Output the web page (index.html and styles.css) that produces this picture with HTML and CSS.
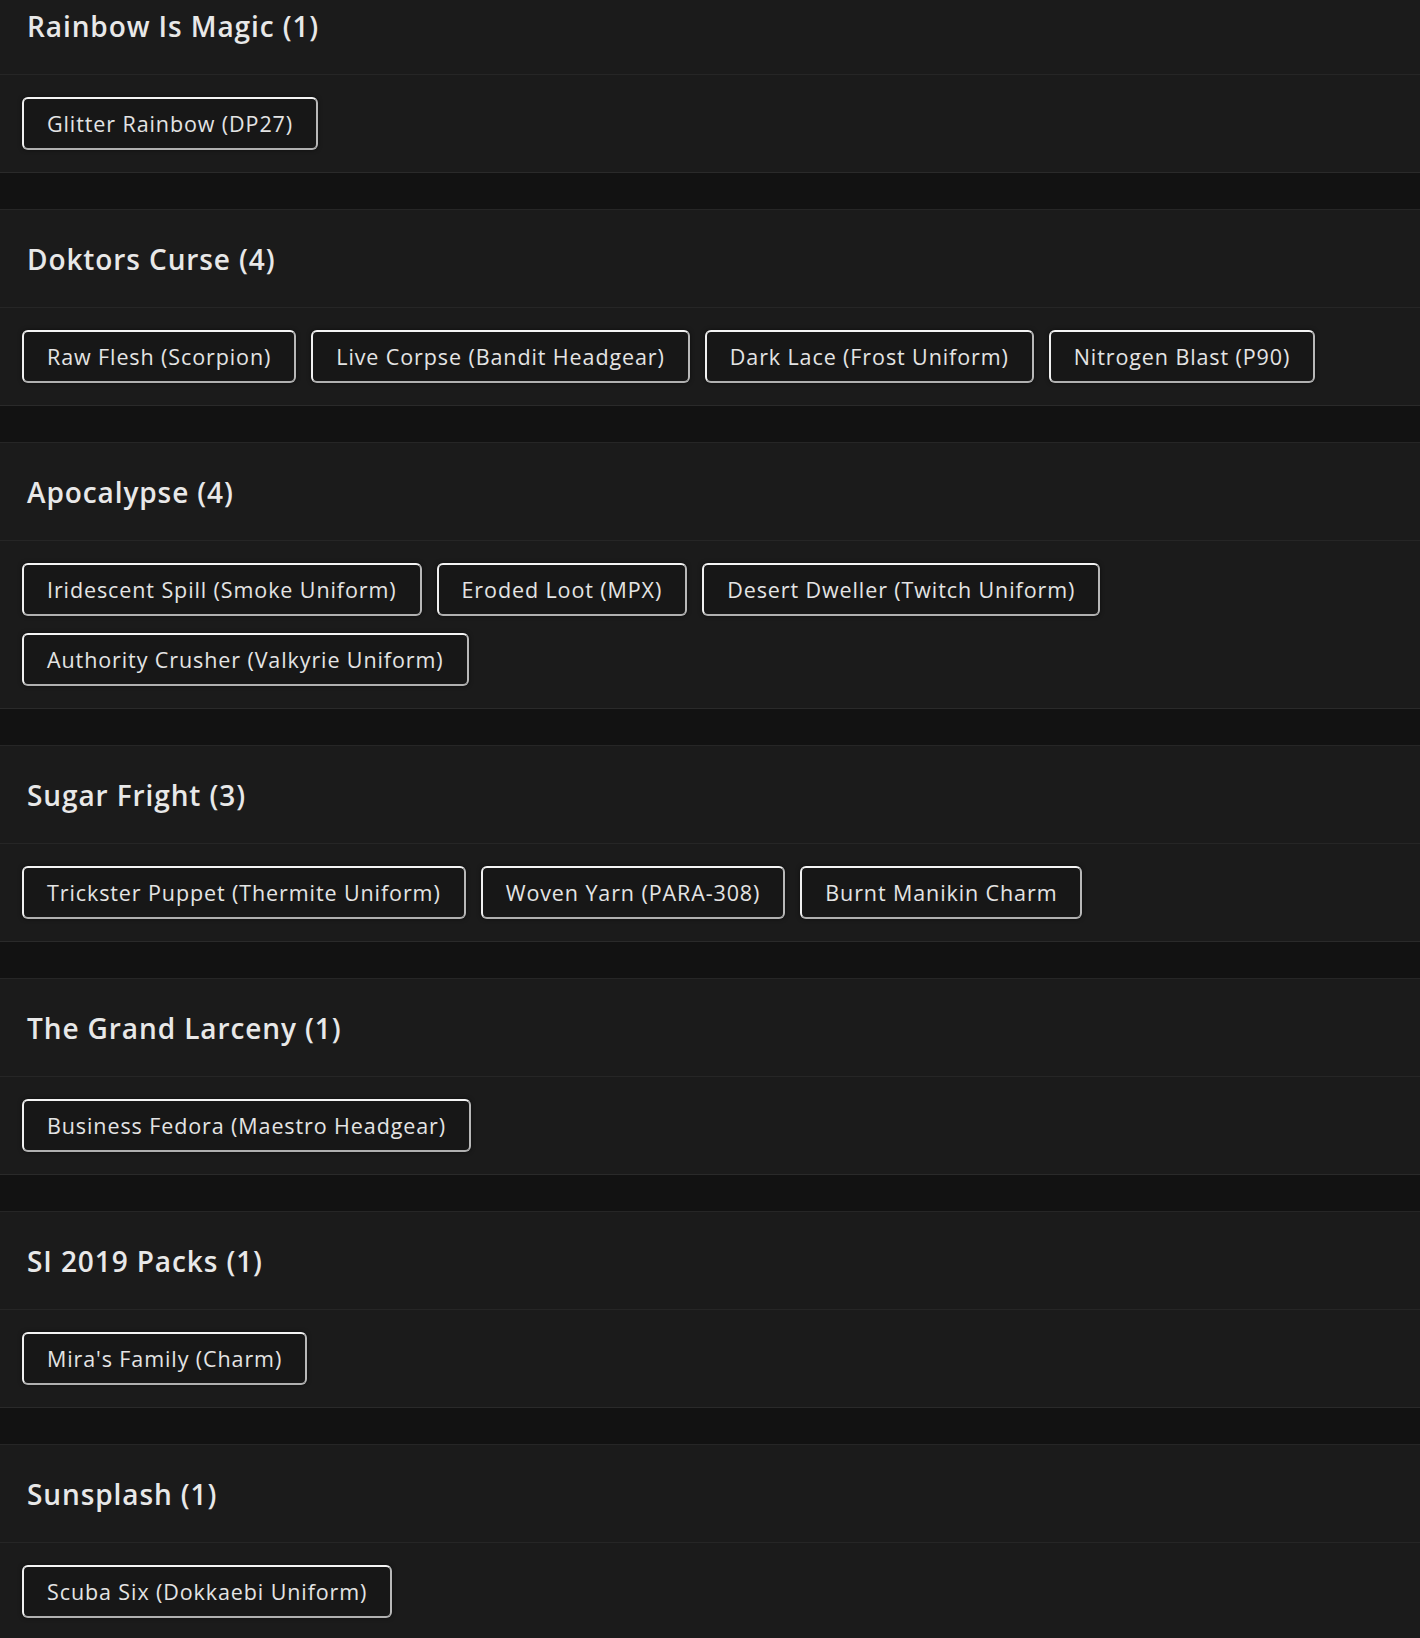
FILE: index.html
```html
<!DOCTYPE html>
<html lang="en">
<head>
<meta charset="utf-8">
<title>Bundles</title>
<link rel="stylesheet" href="styles.css">
</head>
<body>
<main class="list">
  <section class="card">
    <header class="card-head"><h2 class="card-title">Rainbow Is Magic (1)</h2></header>
    <div class="card-body">
      <span class="tag">Glitter Rainbow (DP27)</span>
    </div>
  </section>
  <section class="card">
    <header class="card-head"><h2 class="card-title">Doktors Curse (4)</h2></header>
    <div class="card-body">
      <span class="tag">Raw Flesh (Scorpion)</span>
      <span class="tag">Live Corpse (Bandit Headgear)</span>
      <span class="tag">Dark Lace (Frost Uniform)</span>
      <span class="tag">Nitrogen Blast (P90)</span>
    </div>
  </section>
  <section class="card">
    <header class="card-head"><h2 class="card-title">Apocalypse (4)</h2></header>
    <div class="card-body">
      <span class="tag">Iridescent Spill (Smoke Uniform)</span>
      <span class="tag">Eroded Loot (MPX)</span>
      <span class="tag">Desert Dweller (Twitch Uniform)</span>
      <span class="tag">Authority Crusher (Valkyrie Uniform)</span>
    </div>
  </section>
  <section class="card">
    <header class="card-head"><h2 class="card-title">Sugar Fright (3)</h2></header>
    <div class="card-body">
      <span class="tag">Trickster Puppet (Thermite Uniform)</span>
      <span class="tag">Woven Yarn (PARA-308)</span>
      <span class="tag">Burnt Manikin Charm</span>
    </div>
  </section>
  <section class="card">
    <header class="card-head"><h2 class="card-title">The Grand Larceny (1)</h2></header>
    <div class="card-body">
      <span class="tag">Business Fedora (Maestro Headgear)</span>
    </div>
  </section>
  <section class="card">
    <header class="card-head"><h2 class="card-title">SI 2019 Packs (1)</h2></header>
    <div class="card-body">
      <span class="tag">Mira's Family (Charm)</span>
    </div>
  </section>
  <section class="card">
    <header class="card-head"><h2 class="card-title">Sunsplash (1)</h2></header>
    <div class="card-body">
      <span class="tag">Scuba Six (Dokkaebi Uniform)</span>
    </div>
  </section>
</main>
</body>
</html>
```
FILE: styles.css
```css
html, body {
  margin: 0;
  padding: 0;
  background: #121212;
}
body {
  font-family: "Open Sans", "DejaVu Sans", sans-serif;
  color: #e6e6e6;
}
.list {
  margin-top: -24px;
}
.card {
  background: #1b1b1b;
  border-top: 1px solid #262626;
  border-bottom: 1px solid #2a2a2a;
  margin-bottom: 36px;
}
.card-head {
  height: 97px;
  display: flex;
  align-items: center;
  padding: 0 27px;
  border-bottom: 1px solid #262626;
}
.card-title {
  margin: 0;
  font-size: 28px;
  font-weight: 600;
  letter-spacing: 0.9px;
  color: #e8e8e8;
}
.card-body {
  display: flex;
  flex-wrap: wrap;
  gap: 17px 15px;
  padding: 22px 22px 22px;
}
.tag {
  display: inline-block;
  height: 49px;
  line-height: 49px;
  padding: 0 23px;
  border: 2px solid;
  border-color: #f4f4f4 #b8b8b8 #b0b0b0 #f0f0f0;
  border-radius: 6px;
  background: #171717;
  box-shadow: 0 0 4px rgba(0, 0, 0, 0.5);
  font-size: 21.5px;
  letter-spacing: 0.9px;
  color: #e4e4e4;
  white-space: nowrap;
}
```
